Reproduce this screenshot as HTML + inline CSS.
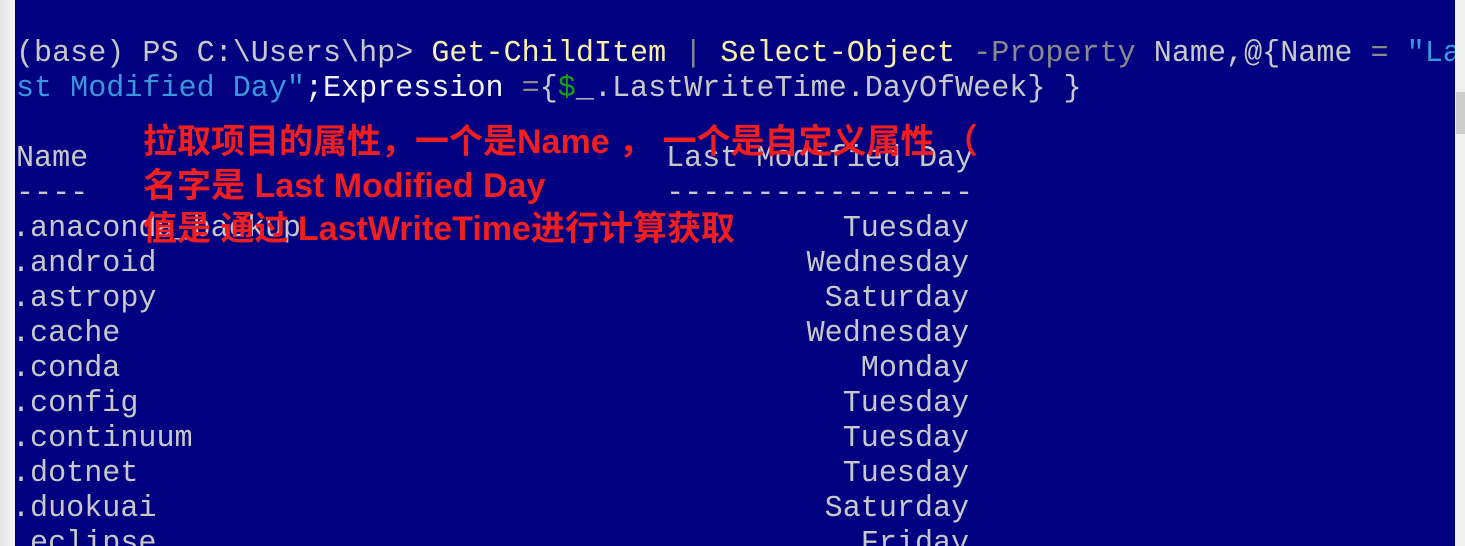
<!DOCTYPE html>
<html><head><meta charset="utf-8"><style>
html,body{margin:0;padding:0;width:1465px;height:546px;overflow:hidden;background:#f0f0f0;}
#l{position:absolute;left:0;top:0;width:15px;height:546px;background:linear-gradient(90deg,#e6e6e6,#f4f4f4);}
#t{position:absolute;left:15px;top:0;width:1440px;height:546px;background:#000080;overflow:hidden;}
#sb{position:absolute;left:1455px;top:0;width:10px;height:546px;background:#f0f0f0;}
#th{position:absolute;left:1456px;top:92px;width:9px;height:42px;background:#cdcdcd;}
.ln{position:absolute;left:1px;height:35px;line-height:35px;font-family:"Liberation Mono",monospace;font-size:30.1px;color:#c8c8c8;white-space:pre;margin-top:2px;}
.row{width:53ch;display:flex;justify-content:space-between;}
.y{color:#f9f1a5}.g{color:#8a8a8a}.b{color:#3a96dd}.gr{color:#13a10e}.w{color:#f2f2f2}
.r{position:absolute;left:143px;font-family:"Liberation Sans","Noto Sans CJK SC",sans-serif;font-weight:bold;font-size:34px;color:#f01e1e;white-space:pre;line-height:40px;}
</style></head><body>
<div id="l"></div>
<div id="t">
<div class="ln" style="top:35px">(base) PS C:\Users\hp&gt; <span class="y">Get-ChildItem</span> <span class="g">|</span> <span class="y">Select-Object</span> <span class="g">-Property</span> Name,@{Name <span class="g">=</span> <span class="b">"La</span></div>
<div class="ln" style="top:70px"><span class="b">st Modified Day"</span><span class="w">;Expression</span> <span class="g">=</span>{<span class="gr">$</span>_.LastWriteTime.DayOfWeek} }</div>
<div class="ln row" style="top:140px"><span>Name</span><span>Last Modified Day</span></div>
<div class="ln row" style="top:175px"><span>----</span><span>-----------------</span></div>
<div class="ln row" style="top:210px;left:-3px"><span>.anaconda_backup</span><span>Tuesday</span></div>
<div class="ln row" style="top:245px;left:-3px"><span>.android</span><span>Wednesday</span></div>
<div class="ln row" style="top:280px;left:-3px"><span>.astropy</span><span>Saturday</span></div>
<div class="ln row" style="top:315px;left:-3px"><span>.cache</span><span>Wednesday</span></div>
<div class="ln row" style="top:350px;left:-3px"><span>.conda</span><span>Monday</span></div>
<div class="ln row" style="top:385px;left:-3px"><span>.config</span><span>Tuesday</span></div>
<div class="ln row" style="top:420px;left:-3px"><span>.continuum</span><span>Tuesday</span></div>
<div class="ln row" style="top:455px;left:-3px"><span>.dotnet</span><span>Tuesday</span></div>
<div class="ln row" style="top:490px;left:-3px"><span>.duokuai</span><span>Saturday</span></div>
<div class="ln row" style="top:525px;left:-3px"><span>.eclipse</span><span>Friday</span></div>
</div>
<div class="r" style="top:122px">拉取项目的属性，一个是Name ， 一个是自定义属性 （</div>
<div class="r" style="top:166px">名字是 Last Modified Day</div>
<div class="r" style="top:209px">值是 通过 LastWriteTime进行计算获取</div>
<div id="sb"></div><div id="th"></div>
</body></html>
